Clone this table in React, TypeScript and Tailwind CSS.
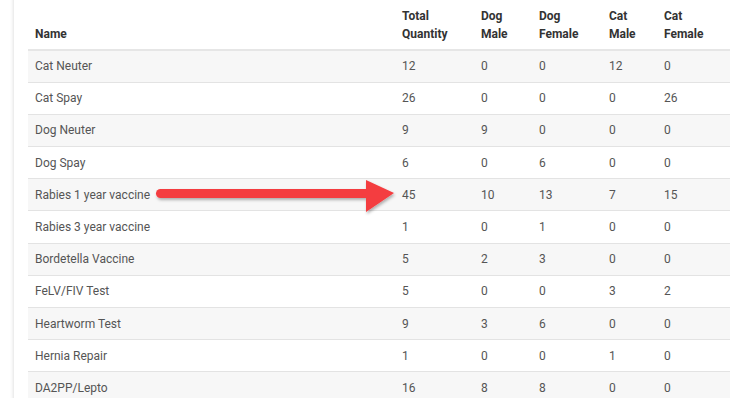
import React from 'react';

type Row = [string, number, number, number, number, number];

const rows: Row[] = [
  ['Cat Neuter', 12, 0, 0, 12, 0],
  ['Cat Spay', 26, 0, 0, 0, 26],
  ['Dog Neuter', 9, 9, 0, 0, 0],
  ['Dog Spay', 6, 0, 6, 0, 0],
  ['Rabies 1 year vaccine', 45, 10, 13, 7, 15],
  ['Rabies 3 year vaccine', 1, 0, 1, 0, 0],
  ['Bordetella Vaccine', 5, 2, 3, 0, 0],
  ['FeLV/FIV Test', 5, 0, 0, 3, 2],
  ['Heartworm Test', 9, 3, 6, 0, 0],
  ['Hernia Repair', 1, 0, 0, 1, 0],
  ['DA2PP/Lepto', 16, 8, 8, 0, 0],
];

const Arrow = () => (
  <svg
    className="absolute left-[150px] top-[176px]"
    width="250"
    height="40"
    viewBox="0 0 250 40"
  >
    <defs>
      <filter id="sh" x="-10%" y="-50%" width="120%" height="200%">
        <feDropShadow dx="1" dy="2" stdDeviation="1.5" floodColor="#000" floodOpacity="0.3" />
      </filter>
    </defs>
    <g filter="url(#sh)" fill="#f43c3f">
      <rect x="6" y="13" width="214" height="9" rx="4.5" />
      <polygon points="216,4 244,17 216,36" />
    </g>
  </svg>
);

export default function App() {
  return (
    <div className="relative w-[730px] h-[398px] overflow-hidden bg-white font-['Roboto',sans-serif]">
      <div className="ml-[14px] -mt-2 pt-2 w-[740px] h-[420px] bg-white shadow-[0_0_4px_rgba(0,0,0,0.18)]">
        <table className="ml-[14px] w-[702px] table-fixed border-collapse text-[12px]">
          <colgroup>
            <col className="w-[367px]" />
            <col className="w-[79px]" />
            <col className="w-[58px]" />
            <col className="w-[70px]" />
            <col className="w-[55px]" />
            <col className="w-[73px]" />
          </colgroup>
          <thead>
            <tr className="h-[50px] border-b-2 border-[#e6e6e6] align-bottom text-left font-bold text-[#333]">
              <th className="pl-[7px] pb-[6px] leading-[18px]">Name</th>
              <th className="pl-[7px] pb-[6px] leading-[18px]">Total<br />Quantity</th>
              <th className="pl-[7px] pb-[6px] leading-[18px]">Dog<br />Male</th>
              <th className="pl-[7px] pb-[6px] leading-[18px]">Dog<br />Female</th>
              <th className="pl-[7px] pb-[6px] leading-[18px]">Cat<br />Male</th>
              <th className="pl-[7px] pb-[6px] leading-[18px]">Cat<br />Female</th>
            </tr>
          </thead>
          <tbody className="text-[#555]">
            {rows.map((r, i) => (
              <tr
                key={r[0]}
                className={`h-[32.2px] border-b border-[#e3e3e3] ${i % 2 === 0 ? 'bg-[#f7f7f7]' : 'bg-white'}`}
              >
                {r.map((c, j) => (
                  <td key={j} className="pl-[7px] leading-[16px]">
                    {c}
                  </td>
                ))}
              </tr>
            ))}
          </tbody>
        </table>
      </div>
      <Arrow />
    </div>
  );
}
